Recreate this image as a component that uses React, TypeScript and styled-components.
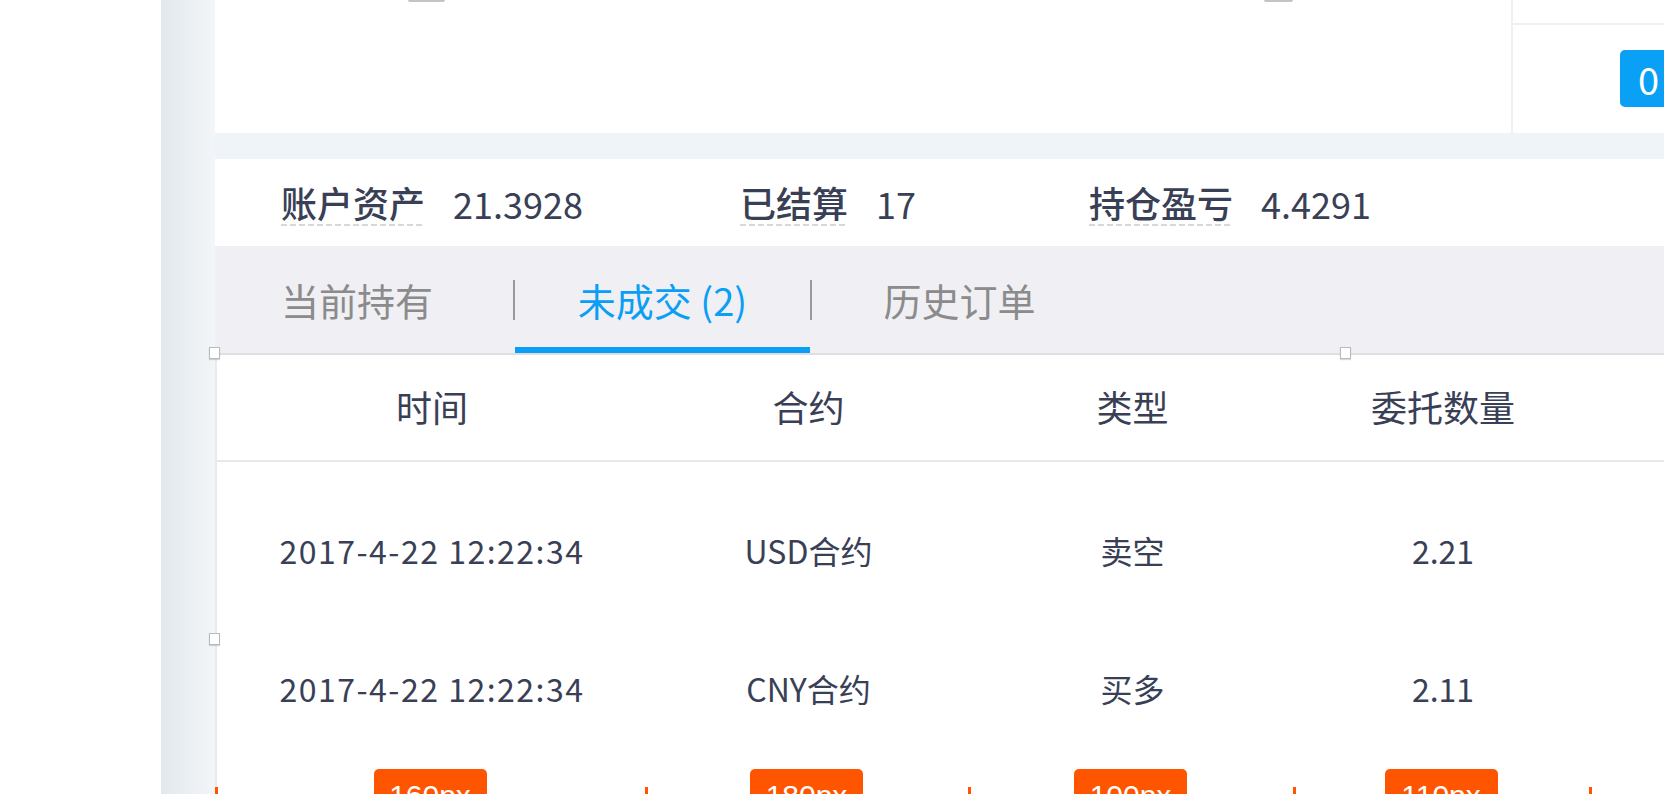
import React from "react";
import styled, { createGlobalStyle } from "styled-components";

const GlobalStyle = createGlobalStyle`
  html, body {
    margin: 0;
    padding: 0;
  }
  body {
    width: 1664px;
    height: 794px;
    overflow: hidden;
    background: #fff;
    font-family: "Noto Sans CJK SC", "Noto Sans", sans-serif;
    color: #394056;
  }
  * {
    box-sizing: border-box;
  }
`;

const COLS = "430px 323px 325px 296px 288px";

const Page = styled.div`
  display: flex;
  width: 1664px;
  height: 794px;
  overflow: hidden;
`;

const Sidebar = styled.aside`
  width: 161px;
  flex: none;
  background: #fff;
`;

const Main = styled.main`
  flex: 1;
  min-width: 0;
  display: flex;
  flex-direction: column;
  gap: 26px;
  padding-left: 54px;
  background: linear-gradient(to right, #e3e8ec 0, #f2f6f9 54px, #eef4f7 54px);
`;

/* ---------- top card ---------- */

const TopCard = styled.section`
  height: 133px;
  flex: none;
  display: flex;
  background: #fff;
`;

const FieldPane = styled.div`
  flex: 1;
  display: flex;
  align-items: flex-start;
  padding-left: 193px;
`;

const CutMark = styled.span<{ $w: number; $gap?: number }>`
  width: ${(p) => p.$w}px;
  height: 2px;
  margin-left: ${(p) => p.$gap ?? 0}px;
  background: #c4c4c4;
  border-radius: 0 0 2px 2px;
`;

const SidePane = styled.div`
  width: 153px;
  flex: none;
  display: flex;
  flex-direction: column;
  border-left: 2px solid #eff0f2;
`;

const SideTop = styled.div`
  height: 25px;
  border-bottom: 2px solid #eff0f2;
`;

const SideBody = styled.div`
  padding: 25px 0 0 107px;
`;

const BlueButton = styled.button`
  width: 120px;
  height: 57px;
  padding: 0 0 0 18px;
  border: 0;
  border-radius: 5px;
  background: #0aa0f5;
  color: #fff;
  font-family: "Noto Sans CJK SC", "Noto Sans", sans-serif;
  font-size: 38px;
  line-height: 57px;
  text-align: left;
  white-space: nowrap;
`;

/* ---------- info card ---------- */

const InfoCard = styled.section`
  position: relative;
  flex: 1;
  min-width: 0;
  display: flex;
  flex-direction: column;
  background: #fff;
`;

const StatsRow = styled.div`
  height: 87px;
  flex: none;
  display: grid;
  grid-template-columns: 459px 349px auto;
  align-items: center;
  padding-left: 66px;
`;

const Stat = styled.div`
  display: flex;
  align-items: center;
  gap: 28px;
`;

const StatLabel = styled.span`
  font-size: 36px;
  font-weight: 500;
  line-height: 44px;
  padding-bottom: 2px;
  background: repeating-linear-gradient(to right, #d8d8d8 0 6px, transparent 6px 9px)
    left bottom / 100% 2px no-repeat;
`;

const StatValue = styled.span`
  font-size: 36px;
  line-height: 44px;
`;

const TabBar = styled.nav`
  height: 109px;
  flex: none;
  display: flex;
  align-items: stretch;
  padding-left: 66px;
  background: #efeff4;
  border-bottom: 2px solid #dfdfe3;
`;

const Tab = styled.div<{ $active?: boolean; $w: number; $start?: boolean }>`
  width: ${(p) => p.$w}px;
  display: flex;
  align-items: center;
  justify-content: ${(p) => (p.$start ? "flex-start" : "center")};
  font-size: 38px;
  white-space: nowrap;
  color: ${(p) => (p.$active ? "#0a9ff5" : "#8b8b8b")};
  border-top: 6px solid transparent;
  border-bottom: 6px solid ${(p) => (p.$active ? "#0a9ff5" : "transparent")};
`;

const TabDivider = styled.span`
  align-self: center;
  width: 2px;
  height: 40px;
  background: #9a9a9a;
`;

const Table = styled.div`
  flex: 1;
  display: flex;
  flex-direction: column;
  border-left: 2px solid #e9eaec;
`;

const HeadRow = styled.div`
  height: 107px;
  flex: none;
  display: grid;
  grid-template-columns: ${COLS};
  align-items: center;
  justify-items: center;
  padding-bottom: 3px;
  font-size: 36px;
  border-bottom: 2px solid #e7e8ea;
  white-space: nowrap;
`;

const Body = styled.div`
  padding-top: 19px;
`;

const Row = styled.div`
  height: 138px;
  display: grid;
  grid-template-columns: ${COLS};
  align-items: center;
  justify-items: center;
  font-size: 32px;
  white-space: nowrap;
`;

const Cell = styled.span<{ $spread?: boolean }>`
  letter-spacing: ${(p) => (p.$spread ? "1.5px" : "0")};
`;

const Measures = styled.div`
  display: grid;
  grid-template-columns: ${COLS};
  margin-top: 12px;
  margin-left: -2px;
`;

const Measure = styled.div`
  position: relative;
  display: flex;
  justify-content: center;
  height: 60px;

  &::before {
    content: "";
    position: absolute;
    left: 0;
    top: 18px;
    width: 3px;
    height: 30px;
    background: #ff5500;
  }
`;

const MeasureTag = styled.span`
  width: 113px;
  height: 52px;
  padding-top: 10px;
  border-radius: 5px;
  background: #ff5500;
  color: #fff;
  font-family: "Liberation Sans", Arial, sans-serif;
  font-size: 30px;
  line-height: 34px;
  text-align: center;
`;

const Handle = styled.span<{ $x: number; $y: number }>`
  position: absolute;
  left: ${(p) => p.$x}px;
  top: ${(p) => p.$y}px;
  width: 11px;
  height: 12px;
  background: #fff;
  border: 1px solid #b9b9b9;
  box-shadow: 0 1px 1px rgba(0, 0, 0, 0.15);
`;

const stats = [
  { label: "账户资产", value: "21.3928" },
  { label: "已结算", value: "17" },
  { label: "持仓盈亏", value: "4.4291" },
];

const headers = ["时间", "合约", "类型", "委托数量", "委托价格"];

const orders = [
  ["2017-4-22 12:22:34", "USD合约", "卖空", "2.21", "6.32"],
  ["2017-4-22 12:22:34", "CNY合约", "买多", "2.11", "6.30"],
];

const widths = ["160px", "180px", "100px", "110px", ""];

export default function App() {
  return (
    <>
      <GlobalStyle />
      <Page>
        <Sidebar />
        <Main>
          <TopCard>
            <FieldPane>
              <CutMark $w={37} />
              <CutMark $w={29} $gap={819} />
            </FieldPane>
            <SidePane>
              <SideTop />
              <SideBody>
                <BlueButton>0</BlueButton>
              </SideBody>
            </SidePane>
          </TopCard>

          <InfoCard>
            <StatsRow>
              {stats.map((s) => (
                <Stat key={s.label}>
                  <StatLabel>{s.label}</StatLabel>
                  <StatValue>{s.value}</StatValue>
                </Stat>
              ))}
            </StatsRow>

            <TabBar>
              <Tab $w={232} $start>当前持有</Tab>
              <TabDivider />
              <Tab $w={295} $active>未成交 (2)</Tab>
              <TabDivider />
              <Tab $w={295}>历史订单</Tab>
            </TabBar>

            <Table>
              <HeadRow>
                {headers.map((h) => (
                  <span key={h}>{h}</span>
                ))}
              </HeadRow>
              <Body>
                {orders.map((o, i) => (
                  <Row key={i}>
                    {o.map((c, j) => (
                      <Cell key={j} $spread={j === 0}>
                        {c}
                      </Cell>
                    ))}
                  </Row>
                ))}
              </Body>
              <Measures>
                {widths.map((w, i) => (
                  <Measure key={i}>{w && <MeasureTag>{w}</MeasureTag>}</Measure>
                ))}
              </Measures>
            </Table>

            <Handle $x={-6} $y={188} />
            <Handle $x={1125} $y={188} />
            <Handle $x={-6} $y={474} />
          </InfoCard>
        </Main>
      </Page>
    </>
  );
}
